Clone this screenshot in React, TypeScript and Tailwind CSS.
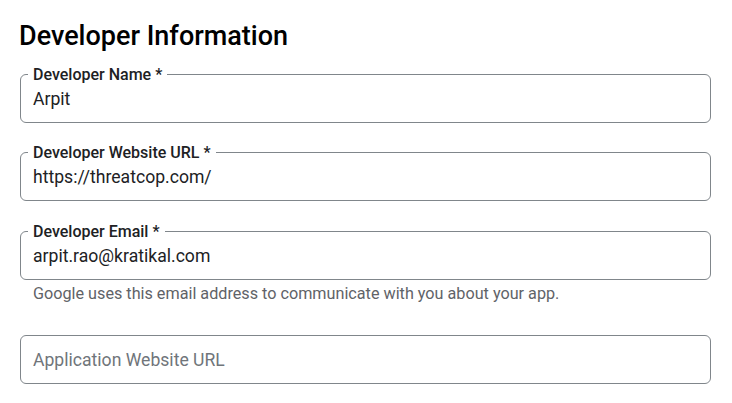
import React from "react";

function Field({
  label,
  value,
  placeholder,
}: {
  label?: string;
  value?: string;
  placeholder?: string;
}) {
  return (
    <div className="relative h-[49px] rounded-[6px] border border-[#80868b] flex items-center px-[12px]">
      {label && (
        <span className="absolute left-[7px] top-0 -translate-y-1/2 bg-white px-[5px] text-[16px] leading-[18px] font-medium text-[#202124]">
          {label}
        </span>
      )}
      {value ? (
        <span className="text-[17.6px] leading-[22px] text-[#202124] pt-[1px]">{value}</span>
      ) : (
        <span className="text-[17.6px] leading-[22px] text-[#70757a] pt-[1px]">{placeholder}</span>
      )}
    </div>
  );
}

export default function App() {
  return (
    <div
      className="w-[732px] h-[403px] bg-white px-[20px] pt-[18px] overflow-hidden"
      style={{ fontFamily: "Roboto, 'Liberation Sans', sans-serif" }}
    >
      <h1 className="text-[27px] leading-[36px] font-medium text-[#000] mb-[20px] -ml-[1px]">
        Developer Information
      </h1>
      <div className="w-[691px] flex flex-col">
        <Field label="Developer Name *" value="Arpit" />
        <div className="h-[29px]" />
        <Field label="Developer Website URL *" value="https://threatcop.com/" />
        <div className="h-[30px]" />
        <Field label="Developer Email *" value="arpit.rao@kratikal.com" />
        <p className="mt-[3px] ml-[13px] text-[16.2px] leading-[22px] text-[#5f6368]">
          Google uses this email address to communicate with you about your app.
        </p>
        <div className="h-[30px]" />
        <Field placeholder="Application Website URL" />
      </div>
    </div>
  );
}
